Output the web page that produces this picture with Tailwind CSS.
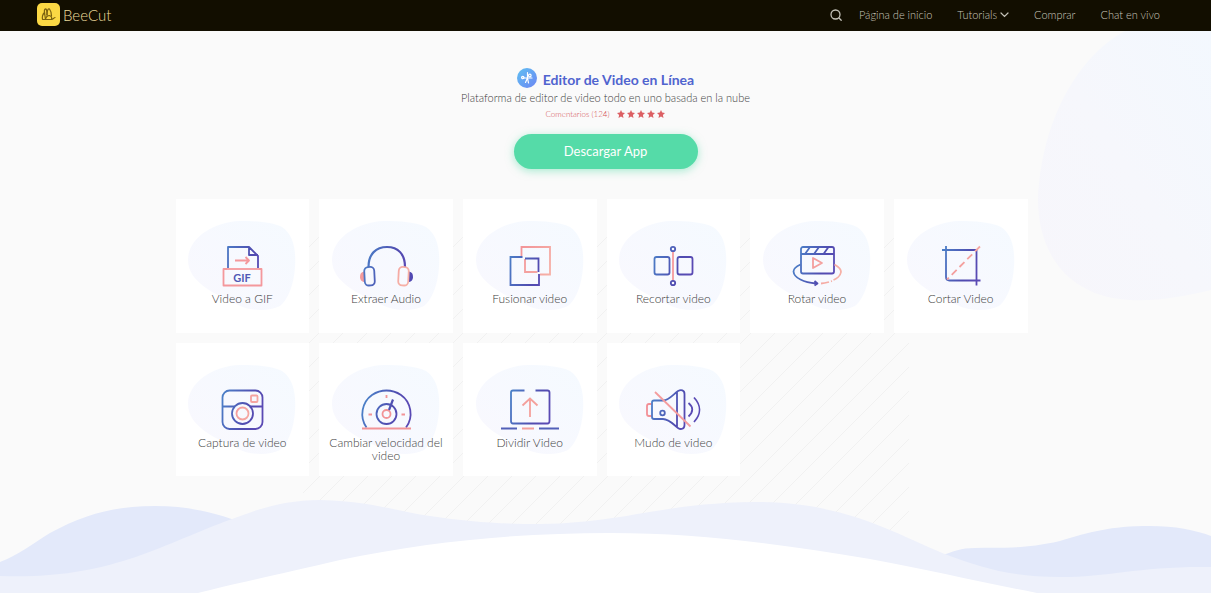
<!DOCTYPE html>
<html lang="es">
<head>
<meta charset="utf-8">
<meta name="viewport" content="width=device-width, initial-scale=1">
<title>BeeCut - Editor de Video en Línea</title>
<script src="https://cdn.jsdelivr.net/npm/@tailwindcss/browser@4"></script>
</head>
<body class="bg-[#fafafa] font-['Lato',sans-serif] font-light text-[#404040]">
<svg class="absolute size-0" aria-hidden="true">
  <defs>
    <linearGradient id="b" gradientUnits="userSpaceOnUse" x1="8" y1="8" x2="50" y2="22"><stop stop-color="#4b83c9"/><stop offset=".7" stop-color="#504cb0"/><stop offset="1" stop-color="#5a4ab4"/></linearGradient>
    <linearGradient id="p" gradientUnits="userSpaceOnUse" x1="10" y1="10" x2="50" y2="30"><stop stop-color="#f28f96"/><stop offset="1" stop-color="#f6b0a6"/></linearGradient>
    <linearGradient id="g" x1="0" y1="1" x2="1" y2="0"><stop stop-color="#f9f8fe"/><stop offset="1" stop-color="#f5faff"/></linearGradient>
    <symbol id="blob" viewBox="0 0 108 90"><path fill="url(#g)" d="M0 39C0 18 24 1 52 0C68 0 84 1 94 6C106 14 108 30 107 46C106 63 100 79 92 85C80 91 62 90 50 84C38 78 28 74 18 67C8 60 0 51 0 39Z"/></symbol>
  </defs>
</svg>
<div class="relative isolate flex min-h-screen flex-col overflow-hidden">
  <svg class="absolute top-[31px] right-0 -z-10 h-[270px] w-[174px]" viewBox="0 0 174 270" aria-hidden="true">
    <defs><linearGradient id="c" x1="0" y1="1" x2="1" y2="0"><stop stop-color="#f7f6fb"/><stop offset=".5" stop-color="#f6f7fc"/><stop offset="1" stop-color="#f3f8fe"/></linearGradient></defs>
    <path fill="url(#c)" d="M88 0C40 26 5 90 1 165C0 220 28 258 76 267C110 273 144 266 174 259V0Z"/>
  </svg>
  <svg class="absolute top-[225px] left-1/2 -z-10 h-[305px] w-[606px] -translate-x-1/2" aria-hidden="true">
    <defs><pattern id="h" width="24" height="24" patternUnits="userSpaceOnUse" patternTransform="translate(4 0)"><path d="M0 24L24 0M-2 2L2 -2M22 26L26 22" stroke="#f1f1f1"/></pattern></defs>
    <rect width="606" height="305" fill="url(#h)"/>
  </svg>
  <svg class="absolute bottom-0 left-0 -z-10 h-[93px] w-full" viewBox="0 500 1211 93" preserveAspectRatio="none" aria-hidden="true">
    <path fill="#e3e9fa" d="M0 562C18 555 34 543 50 533C85 514 115 506 155 506C190 506 215 513 240 522V593H0Z"/>
    <path fill="#e3e9fa" d="M940 556C955 551 960 548 975 548C1000 547 1020 550 1060 541C1090 532 1110 526 1150 526C1175 526 1195 530 1211 536V593H940Z"/>
    <path fill="#eef1fb" d="M0 576C110 580 160 545 232 519C258 509 285 500 320 500C370 501 400 512 430 516C470 522 500 524 540 524C625 523 660 503 755 502C850 502 900 537 950 556C980 567 1010 577 1060 577C1110 577 1140 566 1211 567V593H0Z"/>
    <path fill="#fff" d="M198 593C230 585 280 574 340 560C430 541 520 533 610 533C700 533 780 544 870 559C930 570 980 582 1037 593Z"/>
  </svg>

  <header class="flex h-[31px] items-center justify-between bg-[#120e00] pr-[51px] pl-[37px]">
    <a href="#" class="flex items-center gap-[3px] pb-[2px] text-[15px] leading-5 text-[#eddc9d]">
      <svg class="size-[23px]" viewBox="0 0 23 23" fill="none" aria-hidden="true"><rect width="23" height="23" rx="5" fill="#fbd844"/><g stroke="#7a6110" stroke-width="1.2" stroke-linecap="round" stroke-linejoin="round"><path d="M5.500 16.500C5 14 6 11 7.500 9.500L8.500 16.500Z"/><path d="M7.500 9.500C7 7 8 5.500 9 6C10 7 10 9 10 12"/><path d="M10 12C10 8 11 5 12.500 6C14 8 14.500 11 14.500 13"/><path d="M8.500 16.500C9 14 10.500 12.500 12.500 12.500C14.500 13 15 15 14.500 16.500H8.500"/><path d="M14.500 16.500C16 16.500 16.500 15 18 14.500"/></g></svg>
      BeeCut
    </a>
    <nav class="flex items-center pb-px text-[11px] leading-4 text-[#c9c7bb]">
      <button type="button" aria-label="Buscar" class="mr-[17px]"><svg class="size-3" viewBox="0 0 12 12" fill="none" stroke="#c4c2b8" stroke-width="1.300" stroke-linecap="round"><circle cx="5.500" cy="5.500" r="4.500"/><path d="M9 9L11.200 11.200"/></svg></button>
      <div class="flex items-center gap-[25px]">
        <a href="#">Página de inicio</a>
        <button type="button" class="flex items-center gap-[3px]">Tutorials<svg class="h-[6px] w-[9px]" viewBox="0 0 9 6" fill="none" stroke="#c4c2b8" stroke-width="1.200" stroke-linecap="round" aria-hidden="true"><path d="M1 1L4.500 4.500L8 1"/></svg></button>
        <a href="#">Comprar</a>
        <a href="#">Chat en vivo</a>
      </div>
    </nav>
  </header>

  <main class="flex flex-col items-center px-4 pt-[35px]">
    <div class="flex items-center gap-[6px]">
      <svg class="size-5" viewBox="0 0 20 20" fill="none" aria-hidden="true"><defs><linearGradient id="l" x1="0" y1="0" x2="1" y2="1"><stop stop-color="#5fc0f2"/><stop offset="1" stop-color="#6d86f3"/></linearGradient></defs><circle cx="10" cy="10" r="10" fill="url(#l)"/><g stroke="#fff" stroke-width="1.200" stroke-linecap="round"><path d="M10.500 4.500V10L8.500 14.500M6 10H15M10.500 10L11.500 15"/><circle cx="12.800" cy="7.500" r="1.300"/><circle cx="5.800" cy="9.500" r="1.200"/></g></svg>
      <h1 class="pt-1 text-[14px] leading-5 font-bold text-[#5064cf]">Editor de Video en Línea</h1>
    </div>
    <p class="text-[11px] leading-4">Plataforma de editor de video todo en uno basada en la nube</p>
    <div class="flex items-center gap-[7px] text-[8px] leading-4 text-[#d34b50]">
      <a href="#">Comentarios (124)</a>
      <svg class="h-2 w-[49px]" viewBox="0 0 49 8" fill="#dc6064" role="img" aria-label="5 estrellas"><defs><path id="s" d="M4 0L5.200 2.600L8 3L5.900 5L6.500 8L4 6.500L1.500 8L2.100 5L0 3L2.800 2.600Z"/></defs><use href="#s"/><use href="#s" x="10"/><use href="#s" x="20"/><use href="#s" x="30"/><use href="#s" x="40"/></svg>
    </div>
    <button type="button" class="mt-3 h-[35px] w-[184px] rounded-full bg-[#55dba8] text-[13px] font-normal text-white shadow-[0_2px_8px_#55dba880]">Descargar App</button>

    <div class="flex w-full justify-center pt-[30px] pr-2">
    <ul class="grid w-full max-w-[852px] grid-cols-6 gap-[10px] text-center text-[12px] leading-[13px]">
      <li><a href="#" class="relative isolate flex aspect-square flex-col items-center bg-white px-2 pt-[45px]">
        <svg class="absolute top-[22px] -z-10 h-[90px] w-[108px]" aria-hidden="true"><use href="#blob"/></svg>
        <svg class="mb-1 h-11 w-[60px]" viewBox="0 0 60 44" fill="none" stroke="url(#b)" stroke-width="1.800" stroke-linejoin="round" aria-hidden="true"><path d="M16 24V3H37L46 12V24M37 3V11H46"/><g stroke="#f4989c"><path d="M15 25H11.500V41.500H49.500V25H47"/><path d="M15 25H47"/><path d="M23 16.500H37M33.500 13L37 16.500L33.500 20"/></g><text x="30" y="37.500" text-anchor="middle" font-family="Lato" font-size="11" font-weight="700" fill="#5158b5" stroke="none">GIF</text></svg>
        Video a GIF</a></li>
      <li><a href="#" class="relative isolate flex aspect-square flex-col items-center bg-white px-2 pt-[45px]">
        <svg class="absolute top-[22px] -z-10 h-[90px] w-[108px]" aria-hidden="true"><use href="#blob"/></svg>
        <svg class="mb-1 h-11 w-[60px]" viewBox="0 0 60 44" fill="none" stroke="url(#b)" stroke-width="1.800" aria-hidden="true"><path stroke-width="2.200" d="M12.500 23C12.500 10 20 3 31 3S49 10 49 23"/><path fill="#f49a9c" stroke="none" d="M8 27.500C5 28 4 30 4 33S6 38 9 38Z"/><path fill="#5148b2" stroke="none" d="M53 27.500C56 28 57 30 57 33S55 38 52 38Z"/><rect x="8.500" y="23" width="10" height="18.500" rx="4" transform="rotate(-3 13 32)"/><rect x="42.500" y="23" width="10" height="18.500" rx="4" stroke="url(#p)" transform="rotate(3 48 32)"/></svg>
        Extraer Audio</a></li>
      <li><a href="#" class="relative isolate flex aspect-square flex-col items-center bg-white px-2 pt-[45px]">
        <svg class="absolute top-[22px] -z-10 h-[90px] w-[108px]" aria-hidden="true"><use href="#blob"/></svg>
        <svg class="mb-1 h-11 w-[60px]" viewBox="0 0 60 44" fill="none" stroke="url(#b)" stroke-width="1.800" aria-hidden="true"><path stroke="url(#p)" d="M21.500 12V3H50V30.500H40M25 15V28H37.500"/><path d="M22.500 13H10.500V41H39V30M25 14.500H38.500V28"/></svg>
        Fusionar video</a></li>
      <li><a href="#" class="relative isolate flex aspect-square flex-col items-center bg-white px-2 pt-[45px]">
        <svg class="absolute top-[22px] -z-10 h-[90px] w-[108px]" aria-hidden="true"><use href="#blob"/></svg>
        <svg class="mb-1 h-11 w-[60px]" viewBox="0 0 60 44" fill="none" stroke="url(#b)" stroke-width="1.800" aria-hidden="true"><path stroke="#f49a9c" d="M30 7V36.500"/><rect x="11.500" y="13" width="15" height="17.500" rx="2"/><rect x="34.500" y="13" width="15" height="17.500" rx="2"/><circle cx="30" cy="5" r="2.200"/><circle cx="30" cy="39" r="2.200"/></svg>
        Recortar video</a></li>
      <li><a href="#" class="relative isolate flex aspect-square flex-col items-center bg-white px-2 pt-[45px]">
        <svg class="absolute top-[22px] -z-10 h-[90px] w-[108px]" aria-hidden="true"><use href="#blob"/></svg>
        <svg class="mb-1 h-11 w-[60px]" viewBox="0 0 60 44" fill="none" stroke="url(#b)" stroke-width="1.800" stroke-linejoin="round" aria-hidden="true"><rect x="14" y="3" width="33" height="26.500" rx="2"/><path d="M14 10H47M18 10L23 3M27 10L32 3M36.500 10L41.500 3"/><path d="M13.500 20.500C8 23 6.500 25 6.500 27.500C7 34 17 38.500 29 39.500M27.500 37L30.500 39.500L27.500 41.500"/><g stroke="url(#p)"><path d="M26 14V24L35 19Z"/><path d="M47.500 20.500C52 23 54 25 54 28C53.500 32 49 35 46.500 36"/><path d="M45 37L44 37.300M42 38C39 38.800 37 39.300 34 39.500"/></g></svg>
        Rotar video</a></li>
      <li><a href="#" class="relative isolate flex aspect-square flex-col items-center bg-white px-2 pt-[45px]">
        <svg class="absolute top-[22px] -z-10 h-[90px] w-[108px]" aria-hidden="true"><use href="#blob"/></svg>
        <svg class="mb-1 h-11 w-[60px]" viewBox="0 0 60 44" fill="none" stroke="url(#b)" stroke-width="1.800" aria-hidden="true"><path d="M11 6H45.500V41.500M15 2V33Q15 36.500 18.500 36.500H49.500"/><path stroke="url(#p)" stroke-dasharray="7 4" d="M49 2.500L16 35.500"/></svg>
        Cortar Video</a></li>
      <li><a href="#" class="relative isolate flex aspect-square flex-col items-center bg-white px-2 pt-[45px]">
        <svg class="absolute top-[22px] -z-10 h-[90px] w-[108px]" aria-hidden="true"><use href="#blob"/></svg>
        <svg class="mb-1 h-11 w-[60px]" viewBox="0 0 60 44" fill="none" stroke="url(#b)" stroke-width="1.800" aria-hidden="true"><rect x="10.500" y="2.500" width="40" height="38.500" rx="7"/><path d="M10.500 18.500H23M37.500 18.500H50.500"/><circle cx="30.500" cy="25.500" r="10.500"/><g stroke="url(#p)"><circle cx="30.500" cy="25.500" r="6"/><rect x="39" y="7.500" width="6.500" height="6.500" rx="1"/></g></svg>
        Captura de video</a></li>
      <li><a href="#" class="relative isolate flex aspect-square flex-col items-center bg-white px-2 pt-[45px]">
        <svg class="absolute top-[22px] -z-10 h-[90px] w-[108px]" aria-hidden="true"><use href="#blob"/></svg>
        <svg class="mb-1 h-11 w-[60px]" viewBox="0 0 60 44" fill="none" stroke="url(#b)" stroke-width="1.800" aria-hidden="true"><path d="M10.500 39.500C3 29 6 14 16 7C25 1 36 1 45 7C55 14 58 29 50 39.500"/><circle cx="30.500" cy="26" r="10"/><g stroke="#f29497"><circle cx="30.500" cy="26" r="4"/><path d="M6 40.500H55M30.500 7V10M12.500 26.500H16M45.500 26.500H49"/></g><path stroke-width="2.200" d="M37 11.500L33 22"/></svg>
        Cambiar velocidad del video</a></li>
      <li><a href="#" class="relative isolate flex aspect-square flex-col items-center bg-white px-2 pt-[45px]">
        <svg class="absolute top-[22px] -z-10 h-[90px] w-[108px]" aria-hidden="true"><use href="#blob"/></svg>
        <svg class="mb-1 h-11 w-[60px]" viewBox="0 0 60 44" fill="none" stroke="url(#b)" stroke-width="1.800" aria-hidden="true"><path d="M24.500 2.500H13Q11 2.500 11 4.500V33Q11 35.500 13 35.500H47.500Q49.500 35.500 49.500 33V4.500Q49.500 2.500 47.500 2.500H35.500"/><path stroke="#5260b8" d="M1 40.500H17M39 40.500H59"/><path stroke="#f4a09c" d="M22 40.500H34M30 29V10.500M22.500 17.500L30 10.500L37.500 17.500"/></svg>
        Dividir Video</a></li>
      <li><a href="#" class="relative isolate flex aspect-square flex-col items-center bg-white px-2 pt-[45px]">
        <svg class="absolute top-[22px] -z-10 h-[90px] w-[108px]" aria-hidden="true"><use href="#blob"/></svg>
        <svg class="mb-1 h-11 w-[60px]" viewBox="0 0 60 44" fill="none" stroke="url(#b)" stroke-width="1.800" stroke-linejoin="round" aria-hidden="true"><path stroke="url(#p)" d="M8.500 16H6Q4 16 4 18V26Q4 28 6 28H8.500"/><path d="M11 12.500H20C26 12.500 31 5.500 35 3C38 1.500 41.500 2 41.500 6V37C41.500 41 38 42 35 40C31 37 26 31 20 31H11Q9 31 9 29V14.500Q9 12.500 11 12.500M34 4V39.500M45.500 15C50.500 19 50.500 24 45.500 28.500M51 9.500C58 17 58.500 26 51 34"/><circle cx="19.500" cy="25" r="2.300"/><path stroke="#f49c9d" d="M12 4L47.500 38.500"/></svg>
        Mudo de video</a></li>
    </ul>
    </div>
  </main>
</div>
</body>
</html>
